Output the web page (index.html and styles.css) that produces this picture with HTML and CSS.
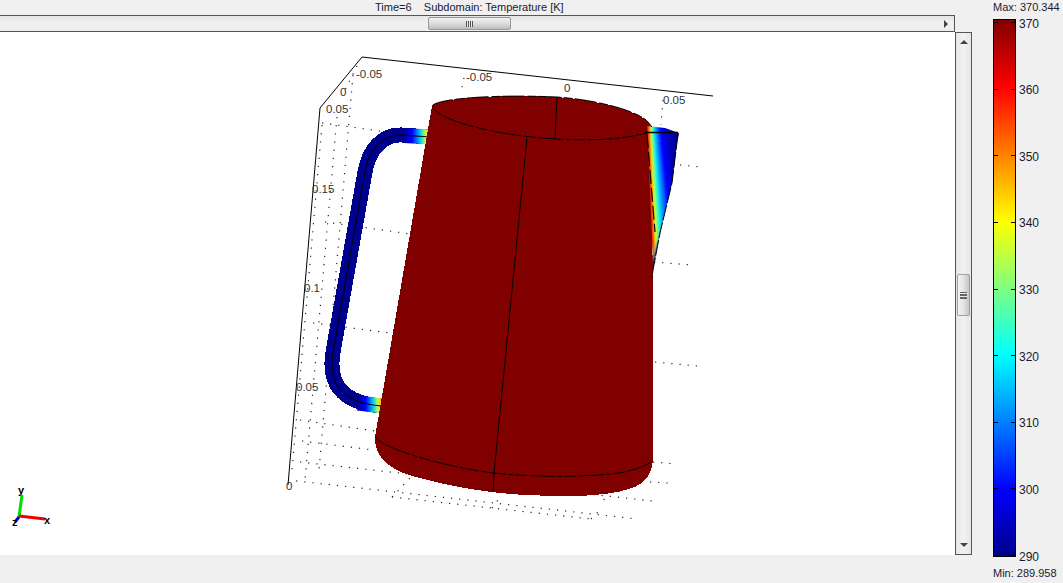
FILE: index.html
```html
<!DOCTYPE html>
<html lang="en">
<head>
<meta charset="utf-8">
<title>Subdomain: Temperature</title>
<link rel="stylesheet" href="styles.css">
</head>
<body>
<div class="app">
  <div class="main">
    <div class="title">Time=6&nbsp;&nbsp;&nbsp;&nbsp;Subdomain: Temperature [K]</div>
    <div class="hscroll">
      <div class="hthumb"><span class="hgrip"></span></div>
      <span class="arrow-right"></span>
    </div>
    <div class="work">
      <svg class="canvas" viewBox="0 32 955 523" width="955" height="523">
        <defs>
          <clipPath id="spout"><polygon points="647,126 665,128 679,133 677,143 672,183 660,233 653,270 652,240"/></clipPath>
          <linearGradient id="hTop" gradientUnits="userSpaceOnUse" x1="404" y1="0" x2="431" y2="0">
            <stop offset="0" stop-color="#00008f"/><stop offset=".3" stop-color="#0000ff"/><stop offset=".6" stop-color="#00c8ff"/><stop offset=".8" stop-color="#c0ff40"/><stop offset=".9" stop-color="#ffc000"/><stop offset="1" stop-color="#e01000"/>
          </linearGradient>
          <linearGradient id="hBot" gradientUnits="userSpaceOnUse" x1="358" y1="0" x2="383" y2="0">
            <stop offset="0" stop-color="#00008f"/><stop offset=".3" stop-color="#0000ff"/><stop offset=".6" stop-color="#00c8ff"/><stop offset=".8" stop-color="#c0ff40"/><stop offset=".9" stop-color="#ffc000"/><stop offset="1" stop-color="#e01000"/>
          </linearGradient>
        </defs>

        <path class="axis" d="M288,485 L320,108 L362,57 L713,96"/>

        <path class="dots" d="M353,75 L319,470 M337,117 L305,480 M322,125 L292,470
          M322,123 L380,131 M325,222 L425,236 M313,323 L390,333 M300,420 L375,431 M302,441 L373,450
          M300,462 L652,501 M288,480 L637,519 M392,497 L591,519
          M392,497 L410,478 M591,519 L600,510 M492,508 L498,500 M604,500 L606,492
          M653,462 L676,464 M650,482 L668,483 M654,262 L692,265 M680,165 L702,167 M655,362 L697,366
          M464,78 L461,92 M663,100 L661,125 M357,66 L345,90"/>

        <text class="tick-label" x="356" y="78">-0.05</text>
        <text class="tick-label" x="466" y="81">-0.05</text>
        <text class="tick-label" x="564" y="92">0</text>
        <text class="tick-label" x="663" y="104">0.05</text>
        <text class="tick-label" x="340" y="96">0</text>
        <text class="tick-label" x="326" y="113">0.05</text>
        <text class="tick-label" x="312" y="193">0.15</text>
        <text class="tick-label" x="304" y="292">0.1</text>
        <text class="tick-label" x="296" y="391">0.05</text>
        <text class="tick-label" x="286" y="490">0</text>

        <path class="handle" d="M430,137 L402,135 C382,134 369,150 365,172 L333,352 C328,382 340,403 382,406"/>
        <path class="handle-top" d="M431,137 L404,135.5"/>
        <path class="handle-bot" d="M383,406 L358,403"/>
        <path class="handle-line" d="M430,137 L402,135 C382,134 369,150 365,172 L333,352 C328,382 340,403 382,406"/>

        <path class="body" d="M432,106 C436,99 490,94 557,97 C600,100 640,112 648,122 L652,128 L652,240 L653,270 L653,460 C652,474 645,482 635,487 C610,497 570,497 527,495 C480,493 430,482 403,473 C385,465 375,455 375,437 Z"/>

        <g clip-path="url(#spout)">
          <g class="spout-fill">
            <rect x="640" y="120" width="45" height="155" fill="#00008a"/>
            <polygon points="646,120 672,120 677,143 652,265" fill="#0000a8"/>
            <polygon points="646,120 666,120 673,178 652,265" fill="#0000d8"/>
            <polygon points="646,120 661,120 670,195 652,265" fill="#0000ff"/>
            <polygon points="646,120 658,120 667,208 652,265" fill="#0060ff"/>
            <polygon points="646,120 656,120 664,218 652,265" fill="#00a0ff"/>
            <polygon points="646,120 654.5,120 662,225 652,265" fill="#00e0ff"/>
            <polygon points="646,120 653,120 660,232 652,265" fill="#40ffc0"/>
            <polygon points="646,120 651.5,120 658,238 652,265" fill="#a0ff60"/>
            <polygon points="646,120 650.5,120 656.5,241 652,265" fill="#ffff00"/>
            <polygon points="646,120 649.5,120 655,244 652,265" fill="#ffa000"/>
            <polygon points="646,120 648.5,120 654,248 652,265" fill="#ff3000"/>
            <polygon points="646,120 647.5,120 653,255 652,265" fill="#c00000"/>
          </g>
        </g>

        <path class="edge" d="M432,106 C436,99 490,94 557,97 C600,100 640,112 648,122 L652,127"/>
        <path class="dash" d="M432,107 C440,120 490,135 556,139 C590,141 625,140 648,132"/>
        <path class="seam" d="M557,98 L555,139 M527,138 L494,473 L493,492"/>
        <path class="dash" d="M375,437 C385,450 450,468 494,473 C530,477 590,478 625,472 C640,468 648,465 653,460"/>
        <path class="spout-top" d="M645,132.5 L678,132.5"/>
        <path class="spout-dash" d="M647,134 L655,232"/>
        <path class="spout-edge" d="M678,134 L672,183 L660,233 L653,270 L652,278"/>

        <path class="ax-y" d="M19,517 L22,495"/>
        <path class="ax-z" d="M19,517 L15,522"/>
        <path class="ax-x" d="M19,516 L45,519"/>
        <text class="ax-label" x="18" y="494">y</text>
        <text class="ax-label" x="44" y="524">x</text>
        <text class="ax-label" x="12" y="526">z</text>
      </svg>
      <div class="vscroll">
        <span class="arrow-up"></span>
        <div class="vthumb"><span class="vgrip"></span></div>
        <span class="arrow-down"></span>
      </div>
    </div>
  </div>
  <div class="legend">
    <div class="legend-text">Max: 370.344</div>
    <div class="bar">
      <div class="tick"><i></i><b></b><i></i><span>370</span></div>
      <div class="tick"><i></i><b></b><i></i><span>360</span></div>
      <div class="tick"><i></i><b></b><i></i><span>350</span></div>
      <div class="tick"><i></i><b></b><i></i><span>340</span></div>
      <div class="tick"><i></i><b></b><i></i><span>330</span></div>
      <div class="tick"><i></i><b></b><i></i><span>320</span></div>
      <div class="tick"><i></i><b></b><i></i><span>310</span></div>
      <div class="tick"><i></i><b></b><i></i><span>300</span></div>
      <div class="tick"><i></i><b></b><i></i><span>290</span></div>
    </div>
    <div class="legend-text legend-min">Min: 289.958</div>
  </div>
</div>
</body>
</html>
```
FILE: styles.css
```css
* { box-sizing: border-box; }
html, body { margin: 0; padding: 0; }
body {
  width: 1063px;
  height: 583px;
  overflow: hidden;
  background: #f0f0f0;
  font-family: "Liberation Sans", Arial, sans-serif;
  font-size: 11px;
  color: #1a1a30;
}
.app { display: flex; height: 583px; }
.main { width: 972px; display: flex; flex-direction: column; }
.title {
  height: 15px;
  padding-left: 375px;
  line-height: 14px;
  white-space: nowrap;
}
.hscroll {
  width: 955px;
  height: 17px;
  border-top: 1px solid #555;
  border-bottom: 1px solid #555;
  border-right: 1px solid #555;
  background: linear-gradient(#e4e4e4, #f0f0f0 40%, #eeeeee);
  display: flex;
  align-items: center;
  padding-left: 428px;
  padding-right: 6px;
}
.hthumb {
  width: 83px;
  height: 13px;
  border: 1px solid #989898;
  border-radius: 2px;
  background: linear-gradient(#f2f2f2, #dcdcdc 50%, #bdbdbd);
  display: flex;
  align-items: center;
  justify-content: center;
}
.hgrip {
  width: 7px;
  height: 6px;
  background: repeating-linear-gradient(90deg, #555 0 1px, #e8e8e8 1px 2px);
}
.arrow-right {
  margin-left: auto;
  width: 0;
  height: 0;
  border-left: 4px solid #444;
  border-top: 4px solid transparent;
  border-bottom: 4px solid transparent;
}
.work { display: flex; height: 523px; }
.canvas { display: block; background: #fff; flex: none; }
.vscroll {
  width: 17px;
  height: 523px;
  border: 1px solid #555;
  background: linear-gradient(90deg, #e6e6e6, #f2f2f2 50%, #e6e6e6);
  display: flex;
  flex-direction: column;
  align-items: center;
  padding: 7px 0;
}
.vthumb {
  width: 13px;
  height: 42px;
  margin-top: 230px;
  border: 1px solid #a0a0a0;
  border-radius: 2px;
  background: linear-gradient(90deg, #f4f4f4, #e4e4e4 50%, #c4c4c4);
  display: flex;
  align-items: center;
  justify-content: center;
}
.vgrip {
  width: 7px;
  height: 7px;
  background: repeating-linear-gradient(#666 0 1px, #e8e8e8 1px 2px, #666 2px 3px);
}
.arrow-up, .arrow-down {
  width: 0;
  height: 0;
  border-left: 4px solid transparent;
  border-right: 4px solid transparent;
}
.arrow-up { border-bottom: 4px solid #444; }
.arrow-down { margin-top: auto; border-top: 4px solid #444; }

.legend {
  width: 91px;
  padding-left: 21px;
  display: flex;
  flex-direction: column;
}
.legend-text { height: 19px; line-height: 14px; white-space: nowrap; }
.legend-min { height: 20px; padding-top: 9px; line-height: 15px; }
.bar {
  width: 23px;
  height: 538px;
  flex: none;
  border: 1px solid #000;
  padding: 2px 0 0;
  display: flex;
  flex-direction: column;
  justify-content: space-between;
  background: linear-gradient(#800000 0%, #ff0000 12.5%, #ffff00 37.5%, #00ffff 62.5%, #0000ff 87.5%, #00008a 100%);
}
.tick {
  display: flex;
  align-items: center;
  width: 56px;
  height: 1px;
}
.tick i { width: 4px; height: 1px; background: #000; flex: none; }
.tick b { width: 13px; flex: none; }
.tick span {
  margin-left: 4px;
  font-size: 12px;
  line-height: 12px;
  padding-top: 2px;
}

.axis { fill: none; stroke: #000; stroke-width: 1; }
.dots { fill: none; stroke: #222; stroke-width: 1.2; stroke-dasharray: 1.2 7; }
.tick-label { font-family: "Liberation Sans", Arial, sans-serif; font-size: 11.5px; fill: #333; }
.handle { fill: none; stroke: #00008f; stroke-width: 15; shape-rendering: crispEdges; }
.handle-top { fill: none; stroke: url(#hTop); stroke-width: 15; }
.handle-bot { fill: none; stroke: url(#hBot); stroke-width: 15; }
.handle-line { fill: none; stroke: #000; stroke-width: 1; }
.body { fill: #800000; shape-rendering: crispEdges; }
.spout-fill { filter: blur(1px); }
.edge { fill: none; stroke: #000; stroke-width: 1; stroke-dasharray: 22 3 9 2; }
.dash { fill: none; stroke: #000; stroke-width: 1; stroke-dasharray: 12 2 26 2 5 2; }
.seam { fill: none; stroke: #000; stroke-width: 1; }
.spout-top { fill: none; stroke: #000; stroke-width: 1.5; }
.spout-dash { fill: none; stroke: #000; stroke-width: 1.2; stroke-dasharray: 14 4; }
.spout-edge { fill: none; stroke: #000; stroke-width: 1; stroke-dasharray: 16 2; }
.ax-y { stroke: #00e000; stroke-width: 3; fill: none; }
.ax-x { stroke: #f00000; stroke-width: 3; fill: none; }
.ax-z { stroke: #0000e0; stroke-width: 3; fill: none; }
.ax-label { font-family: "Liberation Sans", Arial, sans-serif; font-size: 11px; font-weight: 700; fill: #000; }
```
